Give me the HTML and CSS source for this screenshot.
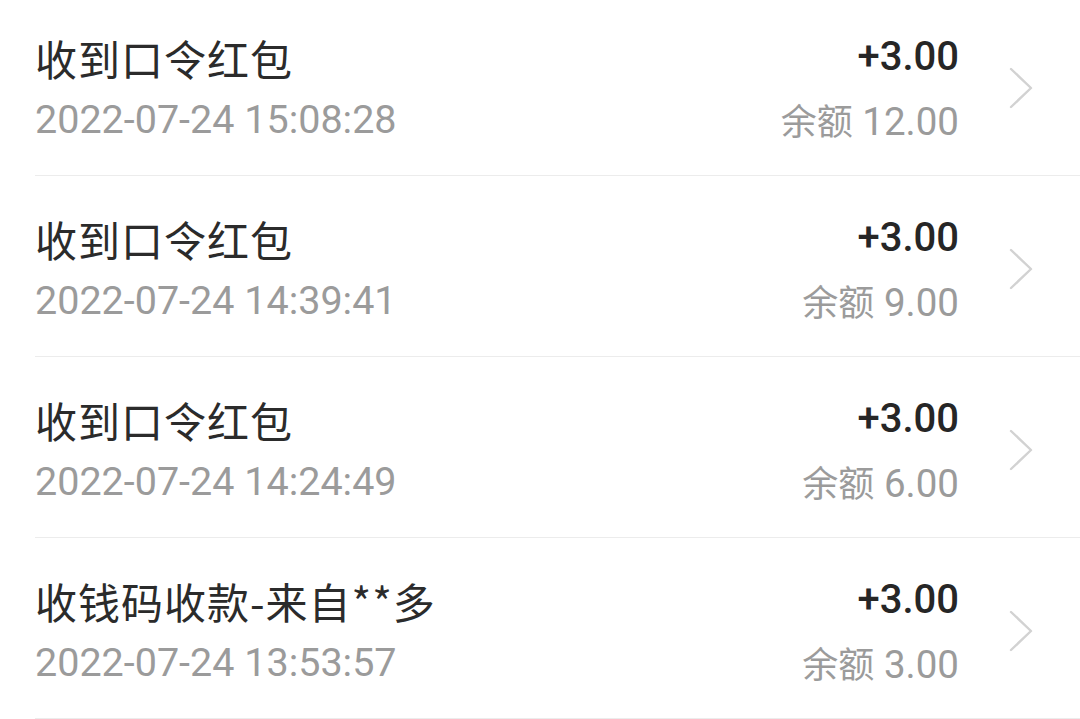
FILE: index.html
```html
<!DOCTYPE html>
<html lang="zh-CN">
<head>
<meta charset="utf-8">
<link rel="stylesheet" href="styles.css">
</head>
<body>
<div class="list">
  <div class="row">
    <div class="info">
      <div class="title">收到口令红包</div>
      <div class="date">2022-07-24 15:08:28</div>
    </div>
    <div class="money">
      <div class="amount">+3.00</div>
      <div class="balance"><span class="cjk">余额</span> 12.00</div>
    </div>
    <svg class="chev" viewBox="0 0 24 42" width="24" height="42"><path d="M2 2 L22 21 L2 40" fill="none" stroke="#d2d2d2" stroke-width="2.4" stroke-linecap="round" stroke-linejoin="round"/></svg>
  </div>
  <div class="row">
    <div class="info">
      <div class="title">收到口令红包</div>
      <div class="date">2022-07-24 14:39:41</div>
    </div>
    <div class="money">
      <div class="amount">+3.00</div>
      <div class="balance"><span class="cjk">余额</span> 9.00</div>
    </div>
    <svg class="chev" viewBox="0 0 24 42" width="24" height="42"><path d="M2 2 L22 21 L2 40" fill="none" stroke="#d2d2d2" stroke-width="2.4" stroke-linecap="round" stroke-linejoin="round"/></svg>
  </div>
  <div class="row">
    <div class="info">
      <div class="title">收到口令红包</div>
      <div class="date">2022-07-24 14:24:49</div>
    </div>
    <div class="money">
      <div class="amount">+3.00</div>
      <div class="balance"><span class="cjk">余额</span> 6.00</div>
    </div>
    <svg class="chev" viewBox="0 0 24 42" width="24" height="42"><path d="M2 2 L22 21 L2 40" fill="none" stroke="#d2d2d2" stroke-width="2.4" stroke-linecap="round" stroke-linejoin="round"/></svg>
  </div>
  <div class="row">
    <div class="info">
      <div class="title">收钱码收款-来自**多</div>
      <div class="date">2022-07-24 13:53:57</div>
    </div>
    <div class="money">
      <div class="amount">+3.00</div>
      <div class="balance"><span class="cjk">余额</span> 3.00</div>
    </div>
    <svg class="chev" viewBox="0 0 24 42" width="24" height="42"><path d="M2 2 L22 21 L2 40" fill="none" stroke="#d2d2d2" stroke-width="2.4" stroke-linecap="round" stroke-linejoin="round"/></svg>
  </div>
</div>
</body>
</html>
```
FILE: styles.css
```css
html, body {
  margin: 0;
  padding: 0;
  background: #ffffff;
  overflow: hidden;
}
body {
  font-family: Roboto, "Noto Sans CJK SC", sans-serif;
}
.list {
  margin-top: -5px;
  padding-left: 35px;
}
.row {
  display: flex;
  align-items: center;
  height: 181px;
  padding-top: 5px;
  border-bottom: 1.5px solid #ececec;
  box-sizing: border-box;
  padding-right: 47px;
}
.info {
  flex: 1;
  display: flex;
  flex-direction: column;
  gap: 9px;
}
.title {
  font-family: "Noto Sans CJK SC", sans-serif;
  font-size: 42px;
  line-height: 56px;
  color: #2b2b2b;
  letter-spacing: 1px;
}
.date {
  font-size: 39.5px;
  line-height: 50px;
  color: #9b9b9b;
}
.money {
  display: flex;
  flex-direction: column;
  align-items: flex-end;
  gap: 9px;
}
.amount {
  font-size: 40px;
  line-height: 56px;
  font-weight: 500;
  color: #262626;
}
.balance {
  font-size: 38.5px;
  line-height: 50px;
  color: #9b9b9b;
}
.cjk {
  font-family: "Noto Sans CJK SC", sans-serif;
  font-size: 36px;
}
.chev {
  margin-left: 50px;
  flex: none;
}
```
